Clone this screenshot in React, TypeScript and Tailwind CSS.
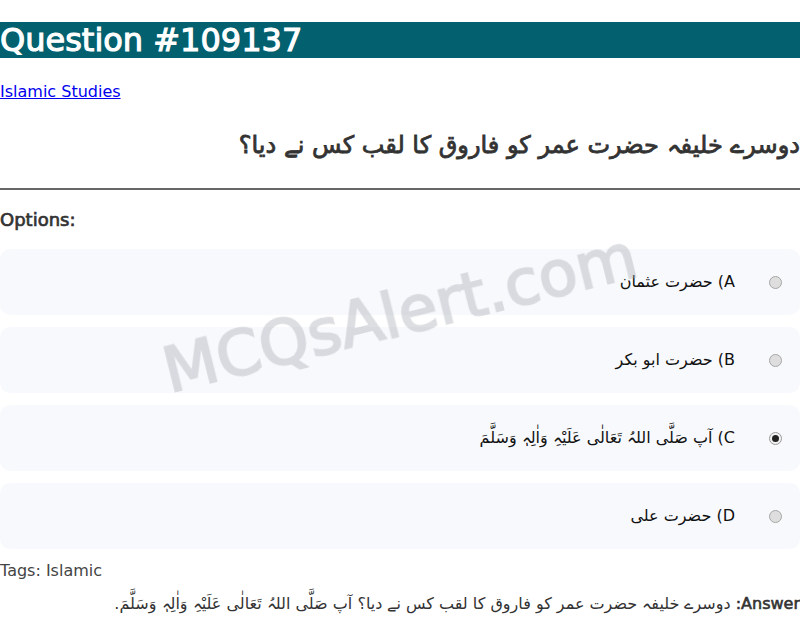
const options = [
  { key: "A", text: "حضرت عثمان" },
  { key: "B", text: "حضرت ابو بکر" },
  { key: "C", text: "آپ صَلَّی اللہُ تَعَالٰی عَلَیْہِ وَاٰلِہٖ وَسَلَّمَ" },
  { key: "D", text: "حضرت علی" },
];

const correct = "C";

function Radio({ checked }: { checked: boolean }) {
  if (checked) {
    return (
      <span className="flex h-[13px] w-[13px] shrink-0 items-center justify-center rounded-full border border-[#9a9a9a] bg-[#f2f2f2]">
        <span className="h-[7px] w-[7px] rounded-full bg-[#222]" />
      </span>
    );
  }
  return <span className="h-[13px] w-[13px] shrink-0 rounded-full border border-[#a6a6a6] bg-[#dedede]" />;
}

export default function App() {
  return (
    <div className="relative min-h-[628px] bg-white font-['DejaVu_Sans',sans-serif] text-[#333]">
      <h1 className="mt-[22px] h-[36px] bg-[#02606f] text-[32px] font-normal leading-[36px] text-white [-webkit-text-stroke:1.1px_white]">
        Question #109137
      </h1>

      <div className="mt-[24px] leading-[19px]">
        <a href="#" className="text-[#0000ee] underline">
          Islamic Studies
        </a>
      </div>

      <h2
        dir="rtl"
        className="mt-[30px] text-right text-[24px] font-normal leading-[28px] text-[#333] [-webkit-text-stroke:0.8px_#333]"
      >
        دوسرے خلیفہ حضرت عمر کو فاروق کا لقب کس نے دیا؟
      </h2>

      <hr className="mt-[29px] border-t-2 border-[#666]" />

      <div className="mt-[19px] text-[18px] font-normal leading-[21px] [-webkit-text-stroke:0.7px_#333]">Options:</div>

      <div className="mt-[19px] flex flex-col gap-[12px]">
        {options.map((o) => (
          <div
            key={o.key}
            dir="rtl"
            className="flex h-[66px] items-center gap-[34px] rounded-[10px] bg-[#f8f9fc] pr-[18px] text-[16px] text-[#111]"
          >
            <Radio checked={o.key === correct} />
            <span>
              {o.key}) {o.text}
            </span>
          </div>
        ))}
      </div>

      <div className="mt-[12px] text-[16px] leading-[19px] text-[#444]">Tags: Islamic</div>

      <p dir="rtl" className="mt-[14px] text-right text-[16px] leading-[20px] text-[#333]">
        <span className="[-webkit-text-stroke:0.6px_#333]">Answer:</span> دوسرے خلیفہ حضرت عمر کو فاروق کا لقب کس نے دیا؟ آپ صَلَّی اللہُ تَعَالٰی عَلَیْہِ وَاٰلِہٖ وَسَلَّمَ.
      </p>

      <div className="pointer-events-none fixed left-1/2 top-1/2 -translate-x-1/2 -translate-y-1/2 -rotate-[14deg] whitespace-nowrap text-[63px] font-normal text-[#a9acb5] opacity-40 [-webkit-text-stroke:2px_#a9acb5]">
        MCQsAlert.com
      </div>
    </div>
  );
}
